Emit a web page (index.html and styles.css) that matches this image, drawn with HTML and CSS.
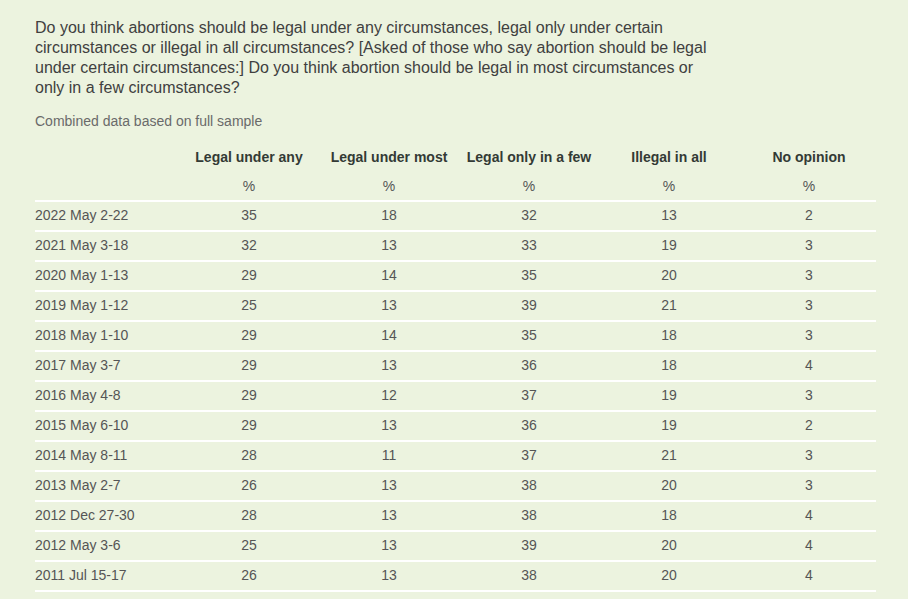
FILE: index.html
```html
<!DOCTYPE html>
<html lang="en">
<head>
<meta charset="utf-8">
<title>Abortion legality</title>
<link rel="stylesheet" href="styles.css">
</head>
<body>
<main class="page">
  <p class="question">Do you think abortions should be legal under any circumstances, legal only under certain circumstances or illegal in all circumstances? [Asked of those who say abortion should be legal under certain circumstances:] Do you think abortion should be legal in most circumstances or only in a few circumstances?</p>
  <p class="note">Combined data based on full sample</p>
  <table class="data">
    <thead>
      <tr class="head-labels">
        <th class="label-col"></th>
        <th>Legal under any</th>
        <th>Legal under most</th>
        <th>Legal only in a few</th>
        <th>Illegal in all</th>
        <th>No opinion</th>
      </tr>
      <tr class="head-units">
        <th class="label-col"></th>
        <th>%</th><th>%</th><th>%</th><th>%</th><th>%</th>
      </tr>
    </thead>
    <tbody>
      <tr><td class="label-col">2022 May 2-22</td><td>35</td><td>18</td><td>32</td><td>13</td><td>2</td></tr>
      <tr><td class="label-col">2021 May 3-18</td><td>32</td><td>13</td><td>33</td><td>19</td><td>3</td></tr>
      <tr><td class="label-col">2020 May 1-13</td><td>29</td><td>14</td><td>35</td><td>20</td><td>3</td></tr>
      <tr><td class="label-col">2019 May 1-12</td><td>25</td><td>13</td><td>39</td><td>21</td><td>3</td></tr>
      <tr><td class="label-col">2018 May 1-10</td><td>29</td><td>14</td><td>35</td><td>18</td><td>3</td></tr>
      <tr><td class="label-col">2017 May 3-7</td><td>29</td><td>13</td><td>36</td><td>18</td><td>4</td></tr>
      <tr><td class="label-col">2016 May 4-8</td><td>29</td><td>12</td><td>37</td><td>19</td><td>3</td></tr>
      <tr><td class="label-col">2015 May 6-10</td><td>29</td><td>13</td><td>36</td><td>19</td><td>2</td></tr>
      <tr><td class="label-col">2014 May 8-11</td><td>28</td><td>11</td><td>37</td><td>21</td><td>3</td></tr>
      <tr><td class="label-col">2013 May 2-7</td><td>26</td><td>13</td><td>38</td><td>20</td><td>3</td></tr>
      <tr><td class="label-col">2012 Dec 27-30</td><td>28</td><td>13</td><td>38</td><td>18</td><td>4</td></tr>
      <tr><td class="label-col">2012 May 3-6</td><td>25</td><td>13</td><td>39</td><td>20</td><td>4</td></tr>
      <tr><td class="label-col">2011 Jul 15-17</td><td>26</td><td>13</td><td>38</td><td>20</td><td>4</td></tr>
    </tbody>
  </table>
</main>
</body>
</html>
```
FILE: styles.css
```css
html, body {
  margin: 0;
  padding: 0;
  background: #ecf3df;
}
body {
  font-family: "Liberation Sans", Arial, sans-serif;
  color: #444;
}
.page {
  padding: 18px 0 0 35px;
}
.question {
  margin: 0;
  max-width: 690px;
  font-size: 16px;
  line-height: 20px;
  color: #404040;
}
.note {
  margin: 14px 0 0;
  font-size: 14px;
  line-height: 18px;
  color: #6a6a6a;
}
.data {
  margin-top: 13px;
  border-collapse: collapse;
  width: 841px;
  table-layout: fixed;
}
.data th, .data td {
  box-sizing: border-box;
  padding: 0 0 0 6px;
  height: 30px;
  text-align: center;
  vertical-align: middle;
  width: 140px;
}
.data .label-col {
  width: 141px;
  padding-left: 0;
  text-align: left;
}
.head-labels th {
  height: 28px;
  font-size: 14px;
  font-weight: bold;
  color: #333a35;
}
.head-units th {
  font-size: 14px;
  font-weight: normal;
  color: #555;
  border-bottom: 2px solid #ffffff;
}
.data td {
  padding-bottom: 2px;
  font-size: 14px;
  color: #555;
  border-bottom: 2px solid #ffffff;
}
```
